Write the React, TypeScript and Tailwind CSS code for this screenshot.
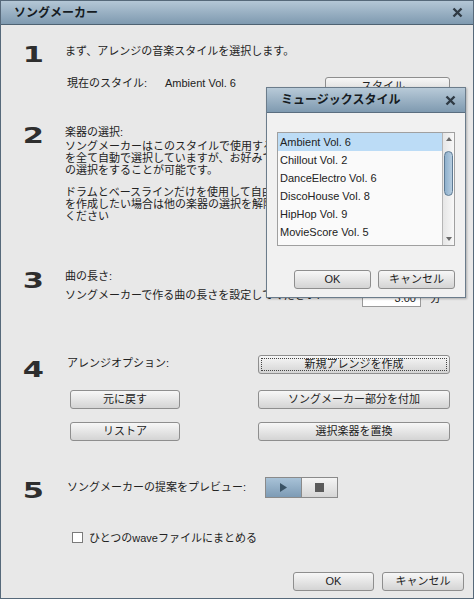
import type { ReactNode } from 'react'

const styles = [
  'Ambient Vol. 6',
  'Chillout Vol. 2',
  'DanceElectro Vol. 6',
  'DiscoHouse Vol. 8',
  'HipHop Vol. 9',
  'MovieScore Vol. 5',
  'Reggae Vol. 1',
]

function Btn({
  children,
  className = '',
  focused = false,
}: {
  children: ReactNode
  className?: string
  focused?: boolean
}) {
  return (
    <div
      className={`relative flex h-[19px] shrink-0 items-center justify-center rounded-[3px] border border-[#8e8e8e] bg-linear-to-b from-[#f7f7f7] to-[#d4d4d4] text-[11px] leading-none text-[#222] ${className}`}
    >
      {focused && (
        <span className="absolute inset-[2px] border border-dotted border-[#444]" />
      )}
      {children}
    </div>
  )
}

function Num({ n, className = '' }: { n: string; className?: string }) {
  return (
    <div className={`flex w-[64px] shrink-0 justify-center ${className}`}>
      <span className="inline-block origin-center scale-x-[1.45] font-['DejaVu_Sans',sans-serif] text-[21px] font-bold leading-[20px] text-[#2e2e2e]">
        {n}
      </span>
    </div>
  )
}

function CloseX() {
  return (
    <svg width="11" height="11" viewBox="0 0 11 11">
      <path d="M1.5 1.5 L9.5 9.5 M9.5 1.5 L1.5 9.5" stroke="#2f3a44" strokeWidth="2.4" />
    </svg>
  )
}

export default function App() {
  return (
    <div className="relative h-[599px] w-[474px] overflow-hidden bg-[#e8e8e8] font-['Liberation_Sans','Noto_Sans_CJK_JP',sans-serif] text-[11px] text-[#222]">
      <div className="flex h-full flex-col border border-[#56697a]">
        {/* title bar */}
        <div className="flex h-[24px] shrink-0 items-center justify-between border-b border-[#4e6272] bg-linear-to-b from-[#b4c7d6] to-[#7f9ab0] pl-[13px] pr-[10px]">
          <span className="text-[12px] font-bold text-[#151b22]">ソングメーカー</span>
          <CloseX />
        </div>

        {/* 1 */}
        <div className="mt-[18px] flex">
          <Num n="1" className="mt-[2px]" />
          <div className="flex flex-1 flex-col pr-[23px]">
            <p className="h-[16px] leading-[16px]">まず、アレンジの音楽スタイルを選択します。</p>
            <div className="mt-[16px] flex h-[21px] items-start">
              <span className="ml-[2px] w-[98px] leading-[16px]">現在のスタイル:</span>
              <span className="leading-[16px]">Ambient Vol. 6</span>
              <Btn className="ml-auto mt-[2px] w-[125px]">スタイル...</Btn>
            </div>
          </div>
        </div>

        {/* 2 */}
        <div className="mt-[28px] flex">
          <Num n="2" className="mt-[2px]" />
          <div className="flex flex-1 flex-col whitespace-nowrap">
            <p className="h-[16px] leading-[16px]">楽器の選択:</p>
            <p className="leading-[12px]">
              ソングメーカーはこのスタイルで使用する楽器
              <br />
              を全て自動で選択していますが、お好みで楽器
              <br />
              の選択をすることが可能です。
            </p>
            <p className="mt-[10px] leading-[12px]">
              ドラムとベースラインだけを使用して自由にアレンジ
              <br />
              を作成したい場合は他の楽器の選択を解除して
              <br />
              ください
            </p>
          </div>
        </div>

        {/* 3 */}
        <div className="mt-[46px] flex">
          <Num n="3" className="mt-[3px]" />
          <div className="flex flex-1 flex-col pr-[23px]">
            <p className="h-[16px] leading-[16px]">曲の長さ:</p>
            <div className="mt-[3px] flex items-start">
              <span className="leading-[16px]">ソングメーカーで作る曲の長さを設定してください:</span>
              <div className="ml-auto mt-[3px] flex items-center gap-[9px]">
                <div className="flex h-[17px] w-[59px] items-center justify-end border border-[#9a9a9a] bg-white pr-[4px]">
                  3:00
                </div>
                <span className="mr-[9px]">分</span>
              </div>
            </div>
          </div>
        </div>

        {/* 4 */}
        <div className="mt-[48px] flex">
          <Num n="4" className="mt-[5px]" />
          <div className="flex flex-1 flex-col pr-[23px]">
            <div className="flex items-start">
              <span className="ml-[2px] leading-[16px]">アレンジオプション:</span>
              <Btn className="ml-auto w-[192px]" focused>
                新規アレンジを作成
              </Btn>
            </div>
            <div className="mt-[16px] flex">
              <Btn className="ml-[5px] w-[110px]">元に戻す</Btn>
              <Btn className="ml-auto w-[192px]">ソングメーカー部分を付加</Btn>
            </div>
            <div className="mt-[13px] flex">
              <Btn className="ml-[5px] w-[110px]">リストア</Btn>
              <Btn className="ml-auto w-[192px]">選択楽器を置換</Btn>
            </div>
          </div>
        </div>

        {/* 5 */}
        <div className="mt-[36px] flex">
          <Num n="5" className="mt-[4px]" />
          <div className="flex flex-1 items-start">
            <span className="ml-[2px] mt-[2px] w-[198px] leading-[16px]">ソングメーカーの提案をプレビュー:</span>
            <div className="flex h-[21px] border border-[#8a8a8a]">
              <div className="flex w-[36px] items-center justify-center border-r border-[#8a8a8a] bg-linear-to-b from-[#a8c2d7] to-[#7d9bb5]">
                <svg width="7" height="9" viewBox="0 0 7 9">
                  <path d="M0 0 L7 4.5 L0 9 Z" fill="#3a5264" />
                </svg>
              </div>
              <div className="flex w-[35px] items-center justify-center bg-linear-to-b from-[#f4f4f4] to-[#d6d6d6]">
                <span className="h-[9px] w-[9px] bg-[#5a5a5a]" />
              </div>
            </div>
          </div>
        </div>

        <div className="ml-[71px] mt-[31px] flex h-[11px] items-center gap-[6px]">
          <span className="h-[11px] w-[11px] border border-[#7a7a7a] bg-white" />
          <span className="leading-[16px]">ひとつのwaveファイルにまとめる</span>
        </div>

        <div className="mt-[29px] flex justify-end gap-[8px] pr-[9px]">
          <Btn className="w-[81px]">OK</Btn>
          <Btn className="w-[82px]">キャンセル</Btn>
        </div>
      </div>

      {/* music style popup */}
      <div className="absolute left-[266px] top-[87px] flex h-[211px] w-[200px] flex-col border border-[#6b7c8b] bg-[#f1f1f1] shadow-[1px_1px_2px_rgba(0,0,0,0.25)]">
        <div className="flex h-[25px] shrink-0 items-center justify-between border-b border-[#5a6e80] bg-linear-to-b from-[#b8cad8] to-[#7f9ab0] pl-[14px] pr-[9px]">
          <span className="text-[12px] font-bold text-[#151b22]">ミュージックスタイル</span>
          <CloseX />
        </div>
        <div className="ml-[10px] mt-[19px] flex h-[114px] w-[178px] border border-[#a0a0a0] bg-[#fafafa]">
          <div className="flex-1 overflow-hidden">
            {styles.map((s, i) => (
              <div
                key={s}
                className={`h-[18px] pl-[2px] leading-[18px] ${i === 0 ? 'bg-[#bcdcf6]' : ''}`}
              >
                {s}
              </div>
            ))}
          </div>
          <div className="flex w-[12px] flex-col border-l border-[#b5b5b5] bg-linear-to-r from-[#e6e6e6] to-[#f8f8f8]">
            <div className="flex h-[12px] items-center justify-center">
              <svg width="6" height="4" viewBox="0 0 6 4">
                <path d="M0 4 L3 0 L6 4 Z" fill="#6a6a6a" />
              </svg>
            </div>
            <div className="mx-[1px] mt-[6px] h-[45px] rounded-[5px] border border-[#5d7a93] bg-linear-to-r from-[#8fb0cc] to-[#b6cde0]" />
            <div className="mt-auto flex h-[12px] items-center justify-center">
              <svg width="6" height="4" viewBox="0 0 6 4">
                <path d="M0 0 L3 4 L6 0 Z" fill="#6a6a6a" />
              </svg>
            </div>
          </div>
        </div>
        <div className="ml-[27px] mt-[24px] flex gap-[7px]">
          <Btn className="w-[77px]">OK</Btn>
          <Btn className="w-[77px]">キャンセル</Btn>
        </div>
      </div>
    </div>
  )
}
